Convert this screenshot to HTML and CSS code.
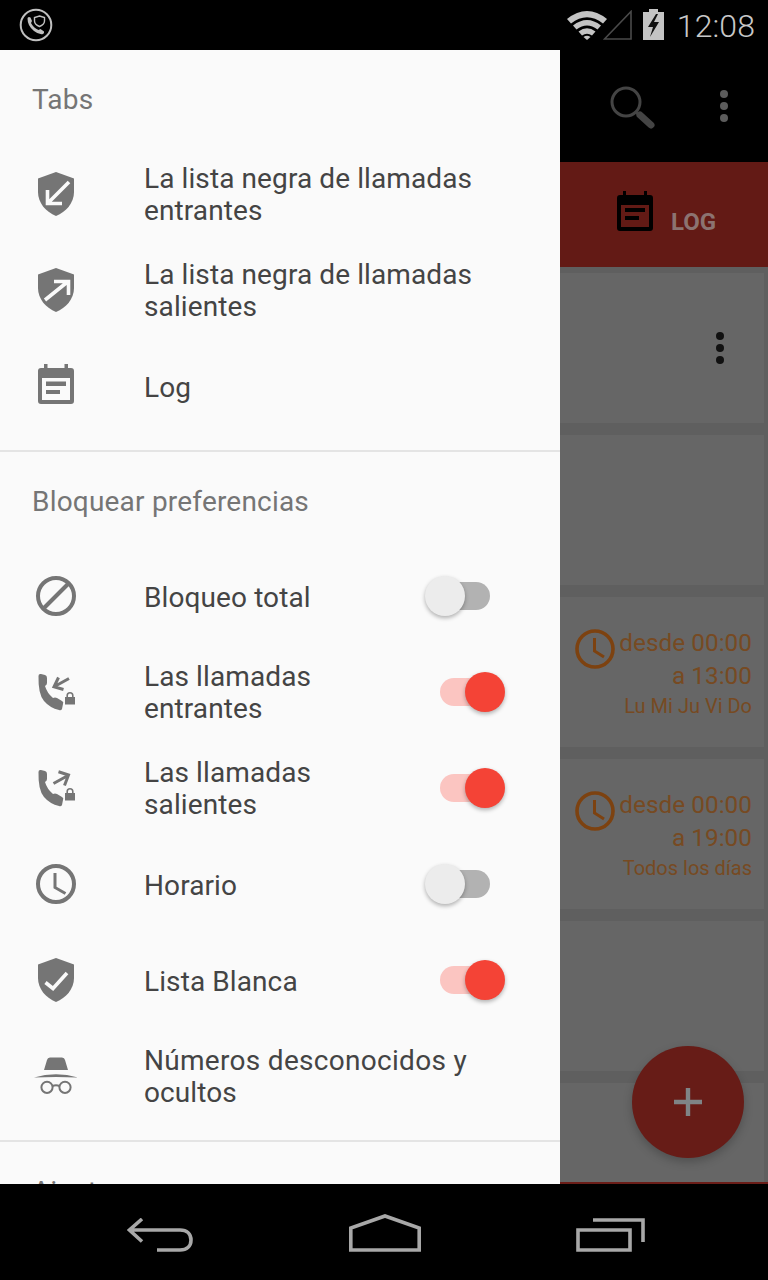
FILE: index.html
```html
<!DOCTYPE html>
<html lang="es">
<head>
<meta charset="utf-8">
<title>Lista negra</title>
<link rel="stylesheet" href="styles.css">
</head>
<body>
<div class="screen">
  <header class="status">
    <svg class="status-app" viewBox="0 0 34 34"><circle cx="17" cy="17" r="15.3" fill="none" stroke="#c0c0c0" stroke-width="2"/><path d="M8.5 10.5 Q8.5 9 10 9 L11.5 9.5 L13 13 L12 15 Q14.5 20 19.5 22 L21.5 21 L25 23.5 Q25.5 25 24 26 Q20 27 15 23 Q8.5 18 8.5 10.5Z" fill="#c0c0c0"/><path d="M20.5 8 L25.5 9.5 V13 Q25.5 16.5 20.5 18.5 Q15.5 16.5 15.5 13 V9.5Z" fill="none" stroke="#c0c0c0" stroke-width="1.4"/></svg>
    <div class="status-right">
      <svg class="st-wifi" viewBox="0 0 40 30"><path d="M0 9 Q20 -7 40 9 L36 13.5 Q20 1 4 13.5Z" fill="#c4c4c4"/><path d="M6 15.5 Q20 4.5 34 15.5 L30.5 19.5 Q20 11.5 9.5 19.5Z" fill="#c4c4c4"/><path d="M11.5 21.5 Q20 15 28.5 21.5 L25 25.5 Q20 22 15 25.5Z" fill="#c4c4c4"/><path d="M16.5 27 Q20 24.5 23.5 27 L20 30Z" fill="#c4c4c4"/></svg>
      <svg class="st-signal" viewBox="0 0 29 30"><path d="M1.5 29 L28 1.5 V29Z" fill="none" stroke="#4a4a4a" stroke-width="1.6"/></svg>
      <svg class="st-batt" viewBox="0 0 21 31"><path d="M6 0 H15 V3 H21 V31 H0 V3 H6Z" fill="#c4c4c4"/><path d="M13 5 L5 18 H10 L7 28 L16 13 H11 L15 5Z" fill="#111"/></svg>
      <span class="clock-time">12:08</span>
    </div>
  </header>

  <main class="stage">
    <section class="app">
      <div class="toolbar">
        <svg class="tb-search" viewBox="0 0 46 46"><circle cx="16" cy="16" r="14" fill="none" stroke="#444" stroke-width="3"/><path d="M26 26 L30 30" stroke="#444" stroke-width="3"/><path d="M30 29 L41 39" stroke="#444" stroke-width="7" stroke-linecap="round"/></svg>
        <div class="dots dots-tb"><i></i><i></i><i></i></div>
      </div>
      <div class="tabs">
        <svg class="tab-icon" viewBox="0 0 36 40"><path d="M6 0 H9 V4 H27 V0 H30 V4 H33 Q36 4 36 7 V37 Q36 40 33 40 H3 Q0 40 0 37 V7 Q0 4 3 4 H6Z M4 14 V36 H32 V14Z M8 17 H28 V21 H8Z M8 25 H22 V29 H8Z" fill="#000" fill-rule="evenodd"/></svg>
        <span class="tab-label">LOG</span>
      </div>
      <div class="list">
        <article class="card card-menu"><div class="dots dots-card"><i></i><i></i><i></i></div></article>
        <article class="card"></article>
        <article class="card card-time">
          <svg class="time-clock" viewBox="0 0 40 40"><circle cx="20" cy="20" r="18" fill="none" stroke="#7d4210" stroke-width="3.6"/><path d="M19.5 9 V22 L29 28" fill="none" stroke="#7d4210" stroke-width="3"/></svg>
          <div class="time-text"><div class="time-line">desde 00:00</div><div class="time-line">a 13:00</div><div class="time-days">Lu Mi Ju Vi Do</div></div>
        </article>
        <article class="card card-time">
          <svg class="time-clock" viewBox="0 0 40 40"><circle cx="20" cy="20" r="18" fill="none" stroke="#7d4210" stroke-width="3.6"/><path d="M19.5 9 V22 L29 28" fill="none" stroke="#7d4210" stroke-width="3"/></svg>
          <div class="time-text"><div class="time-line">desde 00:00</div><div class="time-line">a 19:00</div><div class="time-days">Todos los días</div></div>
        </article>
        <article class="card"></article>
        <article class="card"></article>
      </div>
      <div class="app-edge"></div>
      <div class="fab"><svg viewBox="0 0 28 28"><path d="M14 0 V28 M0 14 H28" stroke="#7f8486" stroke-width="4.4"/></svg></div>
    </section>

    <nav class="drawer">
      <h2 class="drawer-head">Tabs</h2>
      <div class="item">
        <svg class="ico" viewBox="0 0 48 48"><path class="fill" d="M24 2 L42 8.5 V22 C42 33 34 42 24 46 C14 42 6 33 6 22 V8.5Z"/><path class="cut" d="M37 12 L16 33 M15.5 20 V33.5 H30"/></svg>
        <span class="label">La lista negra de llamadas<br>entrantes</span>
      </div>
      <div class="item">
        <svg class="ico" viewBox="0 0 48 48"><path class="fill" d="M24 2 L42 8.5 V22 C42 33 34 42 24 46 C14 42 6 33 6 22 V8.5Z"/><path class="cut" d="M13 34 L36 15.5 M22 15.5 H36.5 V29"/></svg>
        <span class="label">La lista negra de llamadas<br>salientes</span>
      </div>
      <div class="item">
        <svg class="ico" viewBox="0 0 48 48"><path class="fill" fill-rule="evenodd" d="M12 2 H15.5 V6 H32.5 V2 H36 V6 H39 Q42 6 42 9 V39 Q42 42 39 42 H9 Q6 42 6 39 V9 Q6 6 9 6 H12Z M10 16 V38 H38 V16Z M14 19.5 H34 V24 H14Z M14 28 H28 V32 H14Z"/></svg>
        <span class="label one">Log</span>
      </div>
      <hr class="rule">
      <h2 class="drawer-head">Bloquear preferencias</h2>
      <div class="item">
        <svg class="ico" viewBox="0 0 48 48"><circle class="line" cx="24" cy="24" r="18"/><path class="line" d="M37 11 L11 37"/></svg>
        <span class="label one">Bloqueo total</span>
        <span class="switch"><b></b></span>
      </div>
      <div class="item">
        <svg class="ico" viewBox="0 0 48 48"><path class="fill" d="M6.5 8 Q6.5 5.5 9 6 L13 7 Q15 7.5 15 10 L15 15 Q15 17 13 18 Q15 25 21 30 Q23 29 25 30 L30 33 Q32 34 31 36 L30 41 Q29 43 27 42 Q18 40 12 33 Q6 26 6.5 8Z"/><path class="thin" d="M37 10.5 L22.5 18.5 M26.5 9.5 L22 18.8 L31.5 21.5"/><path class="fill" d="M33 29 H43 V36.5 H33Z"/><path class="hair" d="M35.2 29 V27.5 Q35.2 24.8 38 24.8 Q40.8 24.8 40.8 27.5 V29"/></svg>
        <span class="label">Las llamadas<br>entrantes</span>
        <span class="switch on"><b></b></span>
      </div>
      <div class="item">
        <svg class="ico" viewBox="0 0 48 48"><path class="fill" d="M6.5 8 Q6.5 5.5 9 6 L13 7 Q15 7.5 15 10 L15 15 Q15 17 13 18 Q15 25 21 30 Q23 29 25 30 L30 33 Q32 34 31 36 L30 41 Q29 43 27 42 Q18 40 12 33 Q6 26 6.5 8Z"/><path class="thin" d="M21.5 19.5 L36 11.5 M26.5 7.8 L36.5 11 L32.5 21.5"/><path class="fill" d="M33 29 H43 V36.5 H33Z"/><path class="hair" d="M35.2 29 V27.5 Q35.2 24.8 38 24.8 Q40.8 24.8 40.8 27.5 V29"/></svg>
        <span class="label">Las llamadas<br>salientes</span>
        <span class="switch on"><b></b></span>
      </div>
      <div class="item">
        <svg class="ico" viewBox="0 0 48 48"><circle class="line" cx="24" cy="24" r="18"/><path class="thin" d="M23 13 V27.5 L33.5 33.5"/></svg>
        <span class="label one">Horario</span>
        <span class="switch"><b></b></span>
      </div>
      <div class="item">
        <svg class="ico" viewBox="0 0 48 48"><path class="fill" d="M24 2 L42 8.5 V22 C42 33 34 42 24 46 C14 42 6 33 6 22 V8.5Z"/><path class="cut" d="M13.5 26.5 L21 32.5 L35 17"/></svg>
        <span class="label one">Lista Blanca</span>
        <span class="switch on"><b></b></span>
      </div>
      <div class="item">
        <svg class="ico" viewBox="0 0 48 48"><path class="fill" d="M12 18 L15 8 Q15.5 5.5 18 5.5 H30 Q32.5 5.5 33 8 L36 18Z"/><path class="fill" d="M2 25.5 Q24 19 46 25.5 Q24 24.5 2 25.5Z"/><circle class="hair2" cx="15" cy="35.3" r="5.6"/><circle class="hair2" cx="33" cy="35.3" r="5.6"/><path class="hair2" d="M20.5 34 Q24 32.6 27.5 34"/></svg>
        <span class="label"><span class="wide">Números desconocidos y</span><br>ocultos</span>
      </div>
      <hr class="rule">
      <h2 class="drawer-head">Ajustes</h2>
    </nav>
  </main>

  <footer class="navbar">
    <svg class="nav-back" viewBox="0 0 66 34"><path d="M15 1 L2.5 12 L15 23.5 M3 12 H53 C60 12 64 16 64 22 C64 28 60 32 53 32 H30" fill="none" stroke="#a8a8a8" stroke-width="3.6"/></svg>
    <svg class="nav-home" viewBox="0 0 72 38"><path d="M1.8 36 V14 L36 2 L70.2 14 V36Z" fill="none" stroke="#a8a8a8" stroke-width="3.6"/></svg>
    <svg class="nav-recent" viewBox="0 0 69 34"><path d="M2 12 H54 V32 H2Z M17 2 H67 V24" fill="none" stroke="#a8a8a8" stroke-width="3.6"/></svg>
  </footer>
</div>
</body>
</html>
```
FILE: styles.css
```css
* { box-sizing: border-box; }
html, body { margin: 0; padding: 0; }
body { width: 768px; height: 1280px; overflow: hidden; background: #000; font-family: Roboto, "Liberation Sans", sans-serif; }
.screen { display: flex; flex-direction: column; width: 768px; height: 1280px; }

.status { flex: 0 0 50px; display: flex; align-items: center; justify-content: space-between; background: #000; padding: 0 13px 0 19px; }
.status-app { width: 34px; height: 34px; }
.status-right { display: flex; align-items: center; }
.st-wifi { width: 40px; height: 30px; }
.st-signal { width: 29px; height: 30px; margin-left: -4px; }
.st-batt { width: 21px; height: 31px; margin: -2px 0 0 11px; }
.clock-time { margin: 2px 0 0 13px; font-size: 32px; font-weight: 300; color: #c8c8c8; line-height: 48px; letter-spacing: .1px; }

.stage { position: relative; flex: 1 1 auto; overflow: hidden; min-height: 0; }

.app { display: flex; flex-direction: column; height: 100%; position: relative; background: #5f5f5f; }
.toolbar { flex: 0 0 112px; background: #000; display: flex; align-items: center; justify-content: flex-end; padding: 0 40px 0 0; gap: 64px; }
.tb-search { width: 46px; height: 46px; margin-top: 6px; }
.dots { display: flex; flex-direction: column; gap: 4px; }
.dots i { display: block; width: 8px; height: 8px; border-radius: 50%; }
.dots-tb i { background: #5c5c5c; }
.dots-card i { background: #111; }

.tabs { flex: 0 0 105px; background: #631a15; display: flex; align-items: center; padding-left: 617px; gap: 18px; }
.tab-icon { width: 36px; height: 40px; margin-top: -7px; }
.tab-label { font-size: 24px; font-weight: 700; color: #8c7371; margin-top: 15px; }

.list { flex: 1 1 auto; min-height: 0; overflow: hidden; padding: 6px 4px 0 0; display: flex; flex-direction: column; gap: 12px; }
.card { flex: 0 0 150px; background: #666; display: flex; justify-content: flex-end; }
.card-menu { align-items: center; padding: 0 40px 0 0; }
.card-time { padding: 32px 12px 0 0; gap: 4px; align-items: flex-start; }
.time-clock { width: 40px; height: 40px; }
.time-text { margin-top: -3px; text-align: right; color: #774a22; }
.time-line { font-size: 24.3px; line-height: 33px; letter-spacing: .05px; }
.time-days { font-size: 20px; line-height: 28px; }

.app-edge { flex: 0 0 2px; background: #6b1d18; }
.fab { position: absolute; left: 632px; top: 996px; width: 112px; height: 112px; border-radius: 50%; background: #671c17; box-shadow: 0 4px 10px rgba(0,0,0,.22); display: flex; align-items: center; justify-content: center; }
.fab svg { width: 28px; height: 28px; }

.drawer { position: absolute; left: 0; top: 0; bottom: 0; width: 560px; background: #fafafa; overflow: hidden; }
.drawer-head { margin: 0; height: 96px; display: flex; align-items: center; padding: 2px 0 0 32px; font-size: 28px; font-weight: 400; color: #757575; letter-spacing: .2px; }
.item { height: 96px; display: flex; align-items: center; padding-left: 32px; }
.ico { flex: 0 0 48px; width: 48px; height: 48px; margin-right: 64px; }
.fill { fill: #757575; }
.cut { fill: none; stroke: #fafafa; stroke-width: 3.6; }
.line { fill: none; stroke: #757575; stroke-width: 4; }
.thin { fill: none; stroke: #757575; stroke-width: 3; }
.hair { fill: none; stroke: #757575; stroke-width: 1.6; }
.hair2 { fill: none; stroke: #757575; stroke-width: 2; }
.label { margin-top: 2px; font-size: 28px; line-height: 32px; color: #444; letter-spacing: .1px; }
.label.one { margin-top: 4px; }
.wide { letter-spacing: .3px; }
.rule { margin: 16px 0 0; border: 0; height: 2px; background: #e4e4e4; }

.switch { position: relative; margin-left: auto; margin-right: 70px; width: 50px; height: 28px; border-radius: 14px; background: #b2b2b2; }
.switch b { position: absolute; left: -15px; top: -6px; width: 40px; height: 40px; border-radius: 50%; background: #ececec; box-shadow: 0 2px 4px rgba(0,0,0,.3); }
.switch.on { background: #fbc5c1; }
.switch.on b { left: 25px; background: #f44336; }

.navbar { flex: 0 0 96px; background: #000; display: flex; align-items: flex-start; justify-content: space-between; padding: 30px 123px 0 127px; }
.nav-back { width: 66px; height: 34px; margin-top: 4px; }
.nav-home { width: 72px; height: 38px; }
.nav-recent { width: 69px; height: 34px; margin-top: 4px; }
```
